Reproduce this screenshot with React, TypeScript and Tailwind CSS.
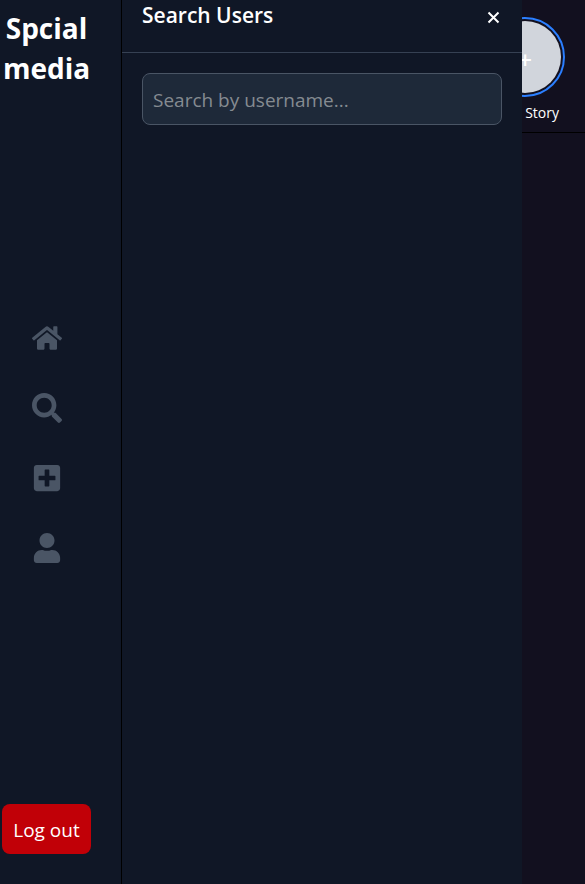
import { FaHome, FaPlusSquare, FaSearch, FaUser } from "react-icons/fa";

const links = [
  { label: "Home", Icon: FaHome },
  { label: "Search", Icon: FaSearch },
  { label: "Create post", Icon: FaPlusSquare },
  { label: "Profile", Icon: FaUser },
];

function Sidebar() {
  return (
    <aside className="flex w-[122px] shrink-0 flex-col items-center justify-between border-r border-black bg-[#101726] pt-2 pr-7 pb-[30px]">
      <h1 className="text-center text-[28px] leading-10 font-bold text-white">
        Spcial media
      </h1>
      <nav className="flex flex-col items-center gap-10 pb-1.5">
        {links.map(({ label, Icon }) => (
          <a key={label} href="#" aria-label={label} className="text-[#4a5565]">
            <Icon size={30} />
          </a>
        ))}
      </nav>
      <button
        type="button"
        className="h-[50px] w-[89px] rounded-lg bg-[#c10007] pt-0.5 text-[19px] whitespace-nowrap text-white"
      >
        Log out
      </button>
    </aside>
  );
}

function Stories() {
  return (
    <section className="flex h-[133px] justify-end border-b border-black pt-[17px] pr-5">
      <div className="flex w-20 flex-col items-center gap-1">
        <button
          type="button"
          aria-label="Add story"
          className="size-20 shrink-0 rounded-full border-2 border-[#2b7fff] p-0.5"
        >
          <span className="flex size-full items-center justify-center rounded-full bg-[#d1d5dc] pt-1.5 text-2xl font-semibold text-white">
            +
          </span>
        </button>
        <span className="text-sm leading-6 whitespace-nowrap text-white">Your Story</span>
      </div>
    </section>
  );
}

function SearchPanel() {
  return (
    <section className="absolute inset-y-0 left-[122px] w-[400px] bg-[#101726]">
      <header className="flex h-[53px] items-start justify-between border-b border-[#364153] px-5">
        <h2 className="text-[21px] leading-[30px] font-semibold text-white">Search Users</h2>
        <button type="button" aria-label="Close" className="flex h-9 items-center text-white">
          <svg viewBox="0 0 18 18" className="size-[18px]" fill="none" stroke="currentColor" strokeWidth="2">
            <path d="M4.5 3.5 14.5 13.5M14.5 3.5 4.5 13.5" />
          </svg>
        </button>
      </header>
      <div className="p-5">
        <input
          type="text"
          aria-label="Search by username"
          placeholder="Search by username..."
          className="h-[52px] w-full rounded-lg border border-[#4a5565] bg-[#1e2939] px-2.5 pt-0.5 text-[19px] text-white placeholder:text-[#858b91]"
        />
      </div>
    </section>
  );
}

export default function App() {
  return (
    <div className="relative flex min-h-screen bg-[#12101f] font-['Segoe_UI','Open_Sans','Noto_Sans',sans-serif]">
      <Sidebar />
      <main className="min-w-0 flex-1">
        <Stories />
      </main>
      <SearchPanel />
    </div>
  );
}
